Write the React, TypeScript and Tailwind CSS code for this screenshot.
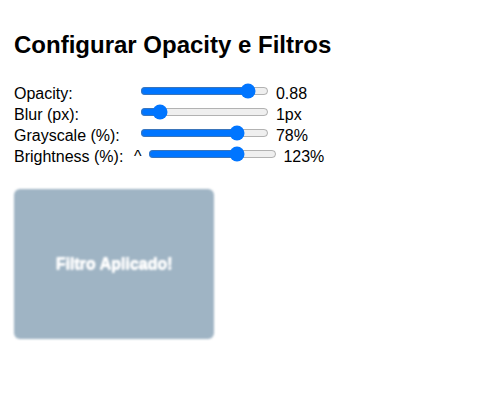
import React from 'react';

const rows = [
  { label: 'Opacity:', min: 0, max: 1, step: 0.01, value: 0.88, out: '0.88' },
  { label: 'Blur (px):', min: 0, max: 10, step: 1, value: 1, out: '1px' },
  { label: 'Grayscale (%):', min: 0, max: 100, step: 1, value: 78, out: '78%' },
  { label: 'Brightness (%):', min: 0, max: 171, step: 1, value: 123, out: '123%', caret: true },
];

export default function App() {
  return (
    <div className="min-h-[405px] bg-white px-[14px] pt-[11px] text-black text-[16px] leading-[normal] font-['Liberation_Sans',Arial,sans-serif]">
      <h2 className="mt-[20px] mb-[22px] text-[24px] font-bold leading-[normal]">
        Configurar Opacity e Filtros
      </h2>

      <div>
        {rows.map((r) => (
          <div key={r.label} className="h-[21px]">
            <label className="inline-block w-[120px]">{r.label}</label>
            {r.caret ? '^ ' : ' '}
            <input
              type="range"
              min={r.min}
              max={r.max}
              step={r.step}
              defaultValue={r.value}
              className="m-[2px] w-[129px]"
            />{' '}
            <span>{r.out}</span>
          </div>
        ))}
      </div>

      <div className="mt-[24px] flex h-[150px] w-[200px] items-center justify-center rounded-[6px] bg-[#9fb4c4] blur-[1px]">
        <span className="font-bold text-white [text-shadow:0.5px_0_0_#fff,0_0.5px_0_#fff]">Filtro Aplicado!</span>
      </div>
    </div>
  );
}
